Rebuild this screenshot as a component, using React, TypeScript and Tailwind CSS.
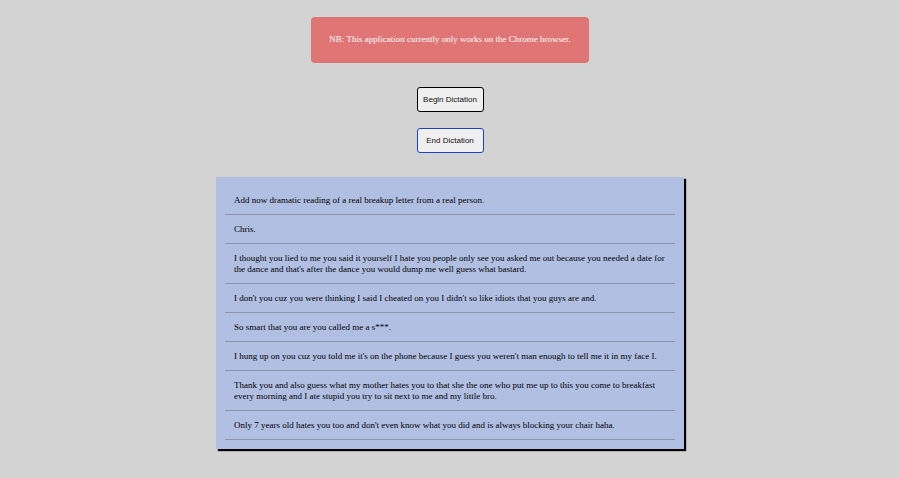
const lines = [
  "Add now dramatic reading of a real breakup letter from a real person.",
  "Chris.",
  "I thought you lied to me you said it yourself I hate you people only see you asked me out because you needed a date for the dance and that's after the dance you would dump me well guess what bastard.",
  "I don't you cuz you were thinking I said I cheated on you I didn't so like idiots that you guys are and.",
  "So smart that you are you called me a s***.",
  "I hung up on you cuz you told me it's on the phone because I guess you weren't man enough to tell me it in my face I.",
  "Thank you and also guess what my mother hates you to that she the one who put me up to this you come to breakfast every morning and I ate stupid you try to sit next to me and my little bro.",
  "Only 7 years old hates you too and don't even know what you did and is always blocking your chair haha.",
];

export default function App() {
  return (
    <div className="min-h-[478px] w-full bg-[#d3d3d3] flex flex-col items-center pt-[17px] font-['Liberation_Serif',serif]">
      <div className="w-[278px] h-[46px] rounded-[4px] bg-[#e07575] text-white text-[9px] flex items-center justify-center">
        NB: This application currently only works on the Chrome browser.
      </div>

      <button
        type="button"
        className="mt-[24px] w-[67px] h-[25px] rounded-[3px] border border-black bg-[#efefef] text-[8px] text-[#111] font-['Liberation_Sans',Arial,sans-serif]"
      >
        Begin Dictation
      </button>
      <button
        type="button"
        className="mt-[16px] w-[67px] h-[25px] rounded-[3px] border border-[#1a3fc9] bg-[#efefef] text-[8px] text-[#111] font-['Liberation_Sans',Arial,sans-serif]"
      >
        End Dictation
      </button>

      <ul className="mt-[24px] w-[468px] bg-[#b1bfe3] p-[9px] shadow-[2px_2px_1px_#000] text-[9px] leading-[11px] text-black">
        {lines.map((t, i) => (
          <li key={i} className="pl-[9px] pr-[9px] pt-[9px] pb-[8px] border-b border-[#8c94a8]">
            {t}
          </li>
        ))}
      </ul>
    </div>
  );
}
